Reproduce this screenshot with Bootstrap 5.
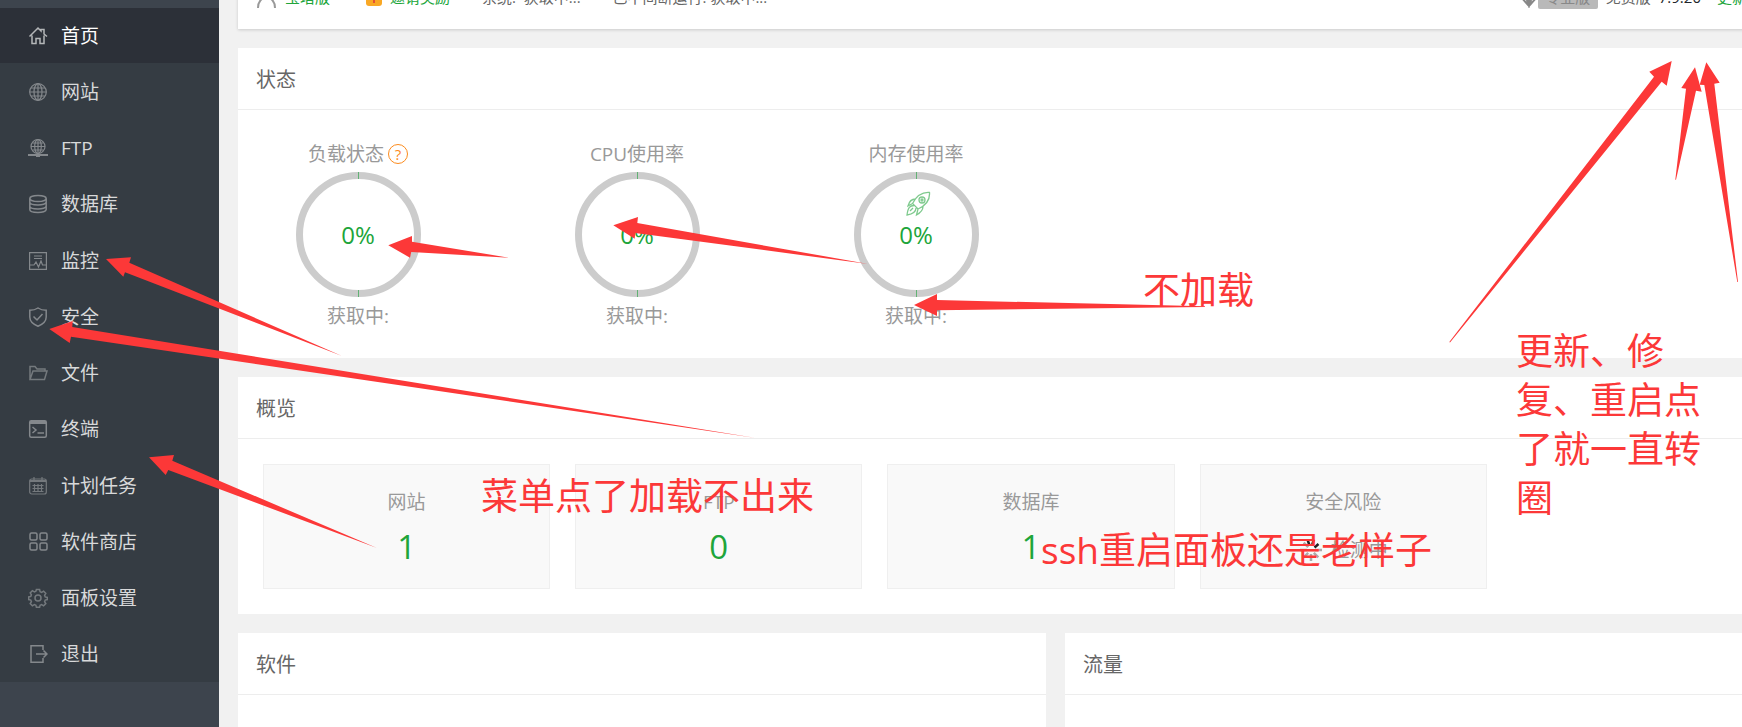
<!DOCTYPE html>
<html lang="zh-CN">
<head>
<meta charset="utf-8">
<meta name="viewport" content="width=device-width, initial-scale=1">
<title>面板首页</title>
<link rel="stylesheet" href="https://cdn.jsdelivr.net/npm/bootstrap@5.3.0/dist/css/bootstrap.min.css">
<script src="https://cdn.jsdelivr.net/npm/bootstrap@5.3.0/dist/js/bootstrap.bundle.min.js"></script>
<style>
:root{--green:#20a53a;--mark-red:#fc3838}
body{font-family:"Open Sans","Noto Sans CJK SC",sans-serif;background:#f1f1f1;color:#666;height:100vh;overflow:hidden}
a{color:inherit;text-decoration:none}
.side{width:219px;background:#3d444d}
.side-menu{margin-top:8px;height:674px;background:#353c43}
.side-menu a{height:55px;padding-left:28px;gap:13px;font-size:19px;line-height:24px;color:#d8d9da}
.side-menu a.active{background:#2c3038;color:#fff}
.side-menu svg{width:20px;height:20px;fill:none;stroke:#84888c;stroke-width:1.5}
.side-menu svg.fine{stroke-width:1.2}
.side-menu svg.dim{stroke:#74797d}
.side-menu a.active svg{stroke:#b4b6b8}
/* the page is wider than the window and slightly scrolled down */
.page{margin:-35px -131px 0 19px;gap:19px}
.topline{height:64px;padding:0 18px;font-size:15px;line-height:20px;box-shadow:0 1px 3px rgba(0,0,0,.16)}
.topline .edition{width:60px;height:24px;line-height:24px;background:#b9b9b9;color:#888;border-radius:2px}
.topline .info{gap:32px}
.green{color:var(--green)}
.panel-title{height:62px;padding:2px 18px 0;font-size:20px;line-height:28px;font-weight:400;border-bottom:1px solid #ededed}
.gauges{padding:32px 50px 30px;gap:139px;font-size:19px;line-height:24px;color:#999}
.gauge{width:140px}
.ring{width:125px;height:125px;margin:6px 0 7px;border:7px solid #ccc;border-radius:50%;font-size:24px;line-height:32px}
.ring::before,.ring::after{content:"";position:absolute;left:55px;width:1px;height:7px;background:#62b274}
.ring::before{top:-7px}.ring::after{bottom:-7px}
.rocket{top:12px;left:44px}
.help{width:20px;height:20px;padding:0;border:1px solid #fc8b1d;border-radius:50%;background:none;color:#fc8b1d;font-size:15px;line-height:18px}
.stats{display:grid;grid-template-columns:repeat(5,1fr);gap:25px;padding:25px 74px 25px 25px}
.stat{height:125px;border:1px solid #efefef;background:#f9f9f9;color:#999;font-size:19px;line-height:28px;padding-top:23px}
.stat strong{font-weight:400;font-size:33px;line-height:44px;color:var(--green);margin-top:9px}
.stat .checking{margin-top:20px}
.panel-body{height:80px}
.halves{gap:19px}
.half{flex:1 1 0}
.marks{inset:0;pointer-events:none;overflow:hidden;color:var(--mark-red);font-size:37px;line-height:49px}
.marks svg{left:0;top:0;fill:var(--mark-red)}
.marks p{white-space:nowrap;margin:0}
.m-load{left:1143px;top:265px}
.m-menu{left:481px;top:471px}
.m-ssh{left:1041px;top:525px}
.m-fix{left:1516px;top:326px}
</style>
</head>
<body class="d-flex position-relative">
<nav class="side flex-shrink-0" aria-label="主菜单">
  <div class="side-menu d-flex flex-column justify-content-between">
    <a href="#" class="active d-flex align-items-center"><svg viewBox="0 0 20 20"><path d="M1.500 10.500 10 2l3 3V3.500h3V8l3 2.500M4 9.500V17.500h4V12.500h4V17.500h4V9.500"/></svg>首页</a>
    <a href="#" class="d-flex align-items-center"><svg class="fine" viewBox="0 0 20 20"><circle cx="10" cy="10" r="8.300"/><ellipse cx="10" cy="10" rx="4" ry="8.300"/><path d="M10 1.700v16.600M1.700 10h16.600M3 6h14M3 14h14"/></svg>网站</a>
    <a href="#" class="d-flex align-items-center"><svg class="fine" viewBox="0 0 20 20"><circle cx="10" cy="8.500" r="7"/><ellipse cx="10" cy="8.500" rx="3.300" ry="7"/><path d="M10 1.500v14M3 8.500h14M4.500 5h11M4.500 12h11"/><path d="M0 17h20M7.500 17h5" stroke-width="2"/><path d="M8 17.500h4" stroke-width="3"/></svg>FTP</a>
    <a href="#" class="d-flex align-items-center"><svg viewBox="0 0 20 20"><ellipse cx="10" cy="4.500" rx="8.200" ry="3"/><path d="M1.800 4.500v11c0 4 16.400 4 16.400 0v-11M1.800 8c0 4 16.400 4 16.400 0M1.800 12c0 4 16.400 4 16.400 0"/></svg>数据库</a>
    <a href="#" class="d-flex align-items-center"><svg class="fine" viewBox="0 0 20 20"><path d="M1.600 1.600h16.800v16.800H1.600zM6 5h8M6 7.500h8M2 14h4l2-3 2.500 5L13 10l1.500 4H18"/></svg>监控</a>
    <a href="#" class="d-flex align-items-center"><svg viewBox="0 0 20 20"><path d="M10 1c3 2 5 2.300 8.200 2.300V10c0 4.500-4 7.500-8.200 9.200C5.800 17.500 1.800 14.500 1.800 10V3.300C5 3.300 7 3 10 1zM5.500 9.500l3.500 3.500 5.500-6"/></svg>安全</a>
    <a href="#" class="d-flex align-items-center"><svg class="dim" viewBox="0 0 20 20"><path d="M2 16.500v-13h5l2 2.500h8V8M2 16.500 5 8h14l-2.500 8.500z"/></svg>文件</a>
    <a href="#" class="d-flex align-items-center"><svg viewBox="0 0 20 20"><rect x="1.700" y="1.700" width="16.600" height="16.600" rx="1.500"/><path d="M2 3.500h16" stroke-width="3"/><path d="M4.500 8l3.500 3-3.500 3M9.500 14H16"/></svg>终端</a>
    <a href="#" class="d-flex align-items-center"><svg class="fine dim" viewBox="0 0 20 20"><rect x="1.700" y="3" width="16.600" height="15" rx="2"/><path d="M2 5h16" stroke-width="2"/><path d="M6 1v3M14 1v3M4.500 9.500h11M4.500 12.500h11M4.500 15.500h11M6.500 8v8M10 8v8M13.500 8v8"/></svg>计划任务</a>
    <a href="#" class="d-flex align-items-center"><svg viewBox="0 0 20 20"><rect x="2" y="1" width="7" height="7" rx="1.500"/><rect x="12" y="1" width="7" height="7" rx="1.500"/><rect x="2" y="11" width="7" height="7" rx="1.500"/><rect x="12" y="11" width="7" height="7" rx="1.500"/></svg>软件商店</a>
    <a href="#" class="d-flex align-items-center"><svg class="dim" viewBox="0 0 20 20"><path d="M8.400 1.500h3.200l.5 2.300 1.500.6 2-1.200 2.200 2.200-1.200 2 .6 1.500 2.100.5v2.200l-2.100.5-.6 1.500 1.200 2-2.200 2.200-2-1.200-1.500.6-.5 2.100H8.400l-.5-2.100-1.500-.6-2 1.200-2.200-2.200 1.200-2-.6-1.500-2.100-.5V8.900l2.100-.5.6-1.500-1.200-2 2.200-2.200 2 1.200 1.500-.6z"/><circle cx="10" cy="10" r="3"/></svg>面板设置</a>
    <a href="#" class="d-flex align-items-center"><svg viewBox="0 0 20 20"><path d="M15 6V1.700H3v16.600h12V14M8 10h11M15.500 6.500 19 10l-3.500 3.500"/></svg>退出</a>
  </div>
</nav>

<main class="page flex-grow-1 d-flex flex-column">
  <header class="topline bg-white d-flex align-items-center flex-shrink-0">
    <div class="info d-flex align-items-center">
      <div class="d-flex align-items-center gap-2">
        <svg width="21" height="24" viewBox="0 0 21 24" fill="none" stroke="#999" stroke-width="2"><circle cx="10.500" cy="7" r="5"/><path d="M2 23c0-14 17-14 17 0"/></svg>
        <a href="#" class="green">宝塔版</a>
      </div>
      <div class="d-flex align-items-center gap-2 ms-1">
        <svg width="16" height="18" viewBox="0 0 16 18"><rect width="16" height="18" rx="3" fill="#f9a825"/><path d="M8 0v15" stroke="#e65135" stroke-width="2"/></svg>
        <a href="#" class="green">邀请奖励</a>
      </div>
      <span>系统:&nbsp; 获取中...</span>
      <span>已不间断运行: 获取中...</span>
    </div>
    <div class="ms-auto d-flex align-items-center">
      <svg width="18" height="22" viewBox="0 0 18 22" fill="none" stroke="#888" stroke-width="2"><path d="M1 11 4 4h10l3 7-8 9zM6 11l3 9 3-9M9 5v14"/></svg>
      <span class="edition text-center me-2">专业版</span>
      <span>免费版</span><span class="text-dark ms-2">7.9.20</span>
      <a href="#" class="green ms-3">更新</a><a href="#" class="green ms-3">修复</a><a href="#" class="green ms-3 me-3">重启</a>
    </div>
  </header>

  <section class="bg-white flex-shrink-0">
    <h2 class="panel-title d-flex align-items-center m-0">状态</h2>
    <div class="gauges d-flex">
      <div class="gauge d-flex flex-column align-items-center">
        <div class="d-flex align-items-center">负载状态<button type="button" class="help ms-1" aria-label="帮助">?</button></div>
        <div class="ring green position-relative d-flex align-items-center justify-content-center">0%</div>
        <div>获取中:</div>
      </div>
      <div class="gauge d-flex flex-column align-items-center">
        <div>CPU使用率</div>
        <div class="ring green position-relative d-flex align-items-center justify-content-center">0%</div>
        <div>获取中:</div>
      </div>
      <div class="gauge d-flex flex-column align-items-center">
        <div>内存使用率</div>
        <div class="ring green position-relative d-flex align-items-center justify-content-center">
          <svg class="rocket position-absolute" width="26" height="26" viewBox="0 0 26 26" fill="none" stroke="#7fca8e" stroke-width="1.300"><path d="M24.500 1.500C18 1 12 4 7.500 12.500l5.500 5.500C22 14 25 8 24.500 1.500zM10.500 8C6 8 4 11 3 15l4.500-2.500M18 15.500c0 4-3 6.500-6.500 8.500L13 18M9 14.500c-4 0-6 2-7 9.500 6-1 9-3 9-7M5 20l3-3"/><circle cx="17" cy="9" r="3"/><circle cx="17" cy="9" r="1"/></svg>
          0%</div>
        <div>获取中:</div>
      </div>
    </div>
  </section>

  <section class="bg-white flex-shrink-0">
    <h2 class="panel-title d-flex align-items-center m-0">概览</h2>
    <div class="stats">
      <div class="stat d-flex flex-column align-items-center">网站<strong>1</strong></div>
      <div class="stat d-flex flex-column align-items-center">FTP<strong>0</strong></div>
      <div class="stat d-flex flex-column align-items-center">数据库<strong>1</strong></div>
      <div class="stat d-flex flex-column align-items-center">安全风险
        <div class="checking d-flex align-items-center gap-2"><svg width="24" height="24" viewBox="0 0 24 24" fill="none" stroke="#aaa" stroke-width="2.500"><path d="M16 12h7M14.800 14.800l4.500 4.500M12 16v7M9.200 14.800l-4.500 4.500M8 12H1M9.200 9.200 4.700 4.700"/><path stroke="#222" d="M10.500 7.500 8.500 1.500M13 7.500l2-6M15.500 9.500l4-3.500"/></svg>检测中</div>
      </div>
    </div>
  </section>

  <div class="halves d-flex flex-shrink-0">
    <section class="half bg-white"><h2 class="panel-title d-flex align-items-center m-0">软件</h2><div class="panel-body"></div></section>
    <section class="half bg-white"><h2 class="panel-title d-flex align-items-center m-0">流量</h2><div class="panel-body"></div></section>
  </div>
</main>

<!-- hand-drawn notes lying over the page -->
<div class="marks position-absolute">
  <svg class="position-absolute" width="1742" height="727" viewBox="0 0 1742 727">
    <path d="M106 259 131 257.300 129.300 262.700 342 356 125 272.300 123.300 276.700z"/>
    <path d="M49.300 329 72.700 321 72.300 327 756 438 71 336.700 69.700 343z"/>
    <path d="M149 457.300 174 455 172.300 460.700 377 548 168.300 470 165.700 475z"/>
    <path d="M388.300 245.300 412 236V241.700L509 257.700 411.300 252 410 257.700z"/>
    <path d="M613.300 225.300 638 217 637.300 223 868.300 264 635.300 233 634.700 238.700z"/>
    <path d="M914 305 937 294V300L1205 306.300V307L937 310.300V316z"/>
    <path d="M1671.700 61 1649.300 71.700 1654 76.700 1449.300 342 1450 342.500 1661.700 81.700 1666.700 85.700z"/>
    <path d="M1695 67.300 1681.300 88 1686 88.700 1675.300 179.700H1676L1696 90.700 1701.700 91.700z"/>
    <path d="M1706.300 62.300 1699.700 84.700 1704.300 85 1737.300 282H1738L1714.300 83.700 1719.700 82.700z"/>
  </svg>
  <p class="m-load position-absolute">不加载</p>
  <p class="m-menu position-absolute">菜单点了加载不出来</p>
  <p class="m-ssh position-absolute">ssh重启面板还是老样子</p>
  <p class="m-fix position-absolute">更新、修<br>复、重启点<br>了就一直转<br>圈</p>
</div>
</body>
</html>
